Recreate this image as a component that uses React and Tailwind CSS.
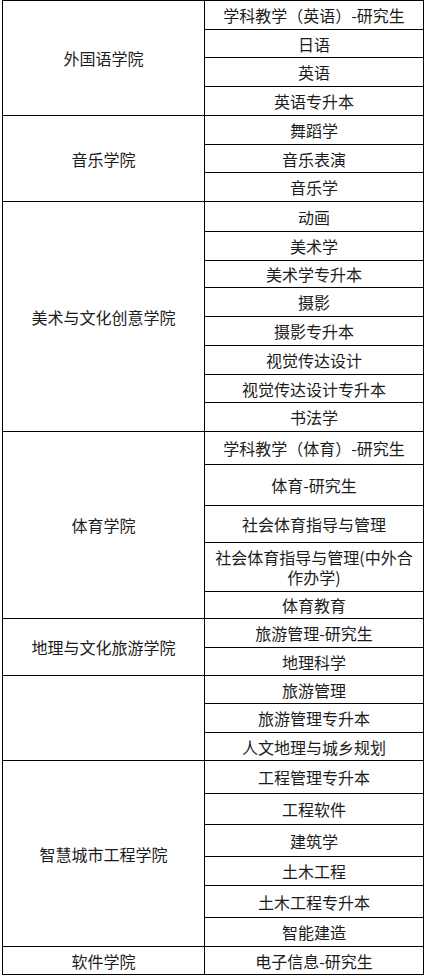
import React from 'react';

const groups = [
  {
    name: '外国语学院',
    rows: [
      ['学科教学（英语）-研究生', 29],
      ['日语', 28],
      ['英语', 29],
      ['英语专升本', 29],
    ],
  },
  {
    name: '音乐学院',
    rows: [
      ['舞蹈学', 29],
      ['音乐表演', 28],
      ['音乐学', 29],
    ],
  },
  {
    name: '美术与文化创意学院',
    rows: [
      ['动画', 30],
      ['美术学', 29],
      ['美术学专升本', 27],
      ['摄影', 29],
      ['摄影专升本', 29],
      ['视觉传达设计', 29],
      ['视觉传达设计专升本', 28],
      ['书法学', 29],
    ],
  },
  {
    name: '体育学院',
    rows: [
      ['学科教学（体育）-研究生', 33],
      ['体育-研究生', 41],
      ['社会体育指导与管理', 37],
      ['社会体育指导与管理(中外合作办学)', 49],
      ['体育教育', 27],
    ],
  },
  {
    name: '地理与文化旅游学院',
    rows: [
      ['旅游管理-研究生', 29],
      ['地理科学', 28],
    ],
  },
  {
    name: '',
    rows: [
      ['旅游管理', 28],
      ['旅游管理专升本', 29],
      ['人文地理与城乡规划', 28],
    ],
  },
  {
    name: '智慧城市工程学院',
    rows: [
      ['工程管理专升本', 33],
      ['工程软件', 31],
      ['建筑学', 32],
      ['土木工程', 29],
      ['土木工程专升本', 32],
      ['智能建造', 29],
    ],
  },
  {
    name: '软件学院',
    rows: [['电子信息-研究生', 28]],
  },
];

const Cell = ({ text, height }) => (
  <div
    className="flex items-center justify-center border-b border-black px-2 text-center leading-[20px]"
    style={{ height }}
  >
    {text}
  </div>
);

export default function App() {
  return (
    <div className="min-h-screen bg-white">
      <div
        className="ml-[2px] w-[422px] border-l border-t border-black text-[16px] text-[#1c1c1c]"
        style={{ fontFamily: '"Noto Sans CJK SC", "Noto Sans", sans-serif' }}
      >
        {groups.map((g, gi) => (
          <div key={gi} className="flex">
            <div className="flex w-[202px] shrink-0 items-center justify-center border-b border-r border-black px-2 text-center">
              {g.name}
            </div>
            <div className="flex w-[219px] shrink-0 flex-col border-r border-black">
              {g.rows.map(([text, h], ri) => (
                <Cell key={ri} text={text} height={h} />
              ))}
            </div>
          </div>
        ))}
      </div>
    </div>
  );
}
